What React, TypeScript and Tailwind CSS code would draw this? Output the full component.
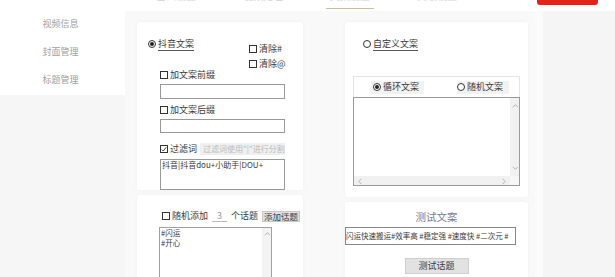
import React from 'react';

const Check = ({ checked = false }: { checked?: boolean }) => (
  <span className="w-[8px] h-[8px] border border-[#333] bg-white flex items-center justify-center shrink-0">
    {checked && (
      <svg viewBox="0 0 8 8" className="w-[7px] h-[7px]">
        <path d="M1 4l2 2 4-5" fill="none" stroke="#222" strokeWidth="1.1" />
      </svg>
    )}
  </span>
);

const Radio = ({ checked = false }: { checked?: boolean }) => (
  <span className="w-[8px] h-[8px] rounded-full border border-[#333] bg-white flex items-center justify-center shrink-0">
    {checked && <span className="w-[4px] h-[4px] rounded-full bg-[#222]" />}
  </span>
);

const Arrow = ({ dir }: { dir: 'up' | 'down' | 'left' | 'right' }) => {
  const d = {
    up: 'M1 5l3-3 3 3',
    down: 'M1 2l3 3 3-3',
    left: 'M5 1L2 4l3 3',
    right: 'M2 1l3 3-3 3',
  }[dir];
  return (
    <svg viewBox="0 0 7 7" className="w-[6px] h-[6px]">
      <path d={d} fill="none" stroke="#a8a8a8" strokeWidth="1" />
    </svg>
  );
};

const tabs = ['基础设置', '视频处理', '文案设置', '高级设置'];

export default function App() {
  return (
    <div className="w-[615px] h-[277px] overflow-hidden bg-[#f6f6f6] font-['Noto_Sans_CJK_SC',sans-serif] text-[#3a3a3a] flex flex-col">
      {/* top bar, mostly cut off */}
      <div className="h-[11px] bg-white flex items-start shrink-0">
        <div className="flex ml-[155px] gap-[45px]">
          {tabs.map((t, i) => (
            <div key={t} className="flex flex-col items-center w-[42px]">
              <span className="text-[10px] leading-[10px] -mt-[9px] text-[#d4d4d4]">{t}</span>
              <span className={`mt-[7px] h-[1px] w-[48px] ${i === 2 ? 'bg-[#cbbd96]' : 'bg-transparent'}`} />
            </div>
          ))}
        </div>
        <div className="ml-[79px] w-[61px] h-[5px] bg-[#e3221c] rounded-b-[3px]" />
      </div>

      <div className="flex flex-1 min-h-0">
        {/* sidebar */}
        <div className="w-[125px] h-[84px] bg-white flex flex-col items-center pt-[7px] gap-[16px] text-[9px] leading-[12px] text-[#a0a0a0] shrink-0">
          <span className="ml-[-4px]">视频信息</span>
          <span className="ml-[-4px]">封面管理</span>
          <span className="ml-[-4px]">标题管理</span>
        </div>

        {/* main */}
        <div className="flex bg-[#f9f9f9] pl-[12px] pt-[11px] gap-[42px] w-[410px] shrink-0">
          {/* left column */}
          <div className="w-[166px] flex flex-col gap-[5px]">
            <div className="h-[175px] bg-white rounded-[3px] shadow-[0_0_4px_rgba(0,0,0,0.04)] pt-[16px] text-[9px] leading-[12px] whitespace-nowrap">
              <div className="h-[31px] flex">
                <div className="pl-[11px] flex items-center gap-[2px] h-[12px]">
                  <Radio checked />
                  <span className="border-b border-[#555] pb-[1px] leading-[11px]">抖音文案</span>
                </div>
                <div className="ml-[55px] mt-[5px] flex flex-col gap-[3px]">
                  <div className="flex items-center gap-[2px] h-[12px]">
                    <Check />
                    <span>清除#</span>
                  </div>
                  <div className="flex items-center gap-[2px] h-[12px]">
                    <Check />
                    <span>清除@</span>
                  </div>
                </div>
              </div>
              <div className="pl-[23px] pr-[18px] flex flex-col">
                <div className="flex items-center gap-[2px] h-[12px]">
                  <Check />
                  <span>加文案前缀</span>
                </div>
                <div className="mt-[3px] h-[15px] border border-[#999]" />
                <div className="mt-[5px] flex items-center gap-[2px] h-[12px]">
                  <Check />
                  <span>加文案后缀</span>
                </div>
                <div className="mt-[3px] h-[14px] border border-[#999]" />
                <div className="mt-[9px] flex items-center h-[14px]">
                  <div className="flex items-center gap-[2px] w-[40px]">
                    <Check checked />
                    <span>过滤词</span>
                  </div>
                  <div className="flex-1 h-[12px] bg-[#efefef] text-[#bcbcbc] text-[8px] leading-[12px] pl-[3px] overflow-hidden">
                    过滤词使用"|"进行分割
                  </div>
                </div>
                <div className="mt-[3px] h-[31px] border border-[#999] text-[8px] leading-[10px] px-[1px] overflow-hidden">
                  抖音|抖音dou+小助手|DOU+
                </div>
              </div>
            </div>

            <div className="flex-1 bg-white rounded-t-[3px] shadow-[0_0_4px_rgba(0,0,0,0.04)] pt-[15px] pl-[25px] text-[9px] leading-[12px] whitespace-nowrap">
              <div className="flex items-center h-[12px]">
                <Check />
                <span className="ml-[2px]">随机添加</span>
                <span className="ml-[4px] w-[15px] text-center border-b border-[#bbb] text-[#999] leading-[11px]">3</span>
                <span className="ml-[4px]">个话题</span>
                <span className="ml-[4px] px-[1px] h-[11px] bg-[#e0e0e0] border border-[#c8c8c8] text-[8.5px] leading-[9px] flex items-center">添加话题</span>
              </div>
              <div className="mt-[5px] -ml-[3px] w-[113px] h-[60px] border border-[#a0a0a0] flex">
                <div className="flex-1 text-[7.5px] leading-[10px] px-[1px] flex flex-col">
                  <span>#闪运</span>
                  <span>#开心</span>
                </div>
                <div className="w-[9px] bg-[#f3f3f3] flex justify-center pt-[3px]">
                  <Arrow dir="up" />
                </div>
              </div>
            </div>
          </div>

          {/* right column */}
          <div className="w-[183px] flex flex-col gap-[5px]">
            <div className="h-[175px] bg-white rounded-[3px] shadow-[0_0_4px_rgba(0,0,0,0.04)] pt-[16px] text-[9px] leading-[12px] whitespace-nowrap">
              <div className="pl-[18px] flex items-center gap-[2px] h-[12px]">
                <Radio />
                <span className="border-b border-[#555] pb-[1px] leading-[11px]">自定义文案</span>
              </div>
              <div className="mx-[8px] mt-[26px] w-[167px]">
                <div className="h-[21px] border-t border-x border-[#e4e4e4] flex items-center pl-[17px]">
                  <div className="flex items-center gap-[2px] bg-[#f2f2f2] h-[13px] pr-[5px] pl-[2px]">
                    <Radio checked />
                    <span>循环文案</span>
                  </div>
                  <div className="ml-[33px] flex items-center gap-[2px] bg-[#f2f2f2] h-[13px] pr-[6px]">
                    <Radio />
                    <span>随机文案</span>
                  </div>
                </div>
                <div className="h-[89px] border border-[#9a9a9a] flex flex-col">
                  <div className="flex-1 flex">
                    <div className="flex-1" />
                    <div className="w-[9px] bg-[#f1f1f1] flex flex-col items-center justify-between py-[5px]">
                      <Arrow dir="up" />
                      <Arrow dir="down" />
                    </div>
                  </div>
                  <div className="h-[9px] flex">
                    <div className="flex-1 bg-[#f1f1f1] flex items-center justify-between px-[3px]">
                      <Arrow dir="left" />
                      <Arrow dir="right" />
                    </div>
                    <div className="w-[9px] bg-[#f7f7f7]" />
                  </div>
                </div>
              </div>
            </div>

            <div className="flex-1 bg-white rounded-t-[3px] shadow-[0_0_4px_rgba(0,0,0,0.04)] flex flex-col items-center pt-[8px] whitespace-nowrap">
              <span className="text-[10.5px] leading-[14px] text-[#7b7b95]">测试文案</span>
              <div className="mt-[3px] ml-[-12px] w-[171px] h-[18px] border border-[#888] text-[7.5px] leading-[16px] overflow-hidden">
                闪运快速搬运#效率高 #稳定强 #速度快 #二次元 #
              </div>
              <div className="mt-[13px] w-[64px] h-[16px] bg-[#e2e2e2] border border-[#cfcfcf] text-[9px] leading-[14px] text-center">
                测试话题
              </div>
            </div>
          </div>
        </div>

        <div className="w-[8px] bg-[#fbfbfb]" />
        <div className="flex-1 bg-[#f5f5f5]" />
      </div>
    </div>
  );
}
